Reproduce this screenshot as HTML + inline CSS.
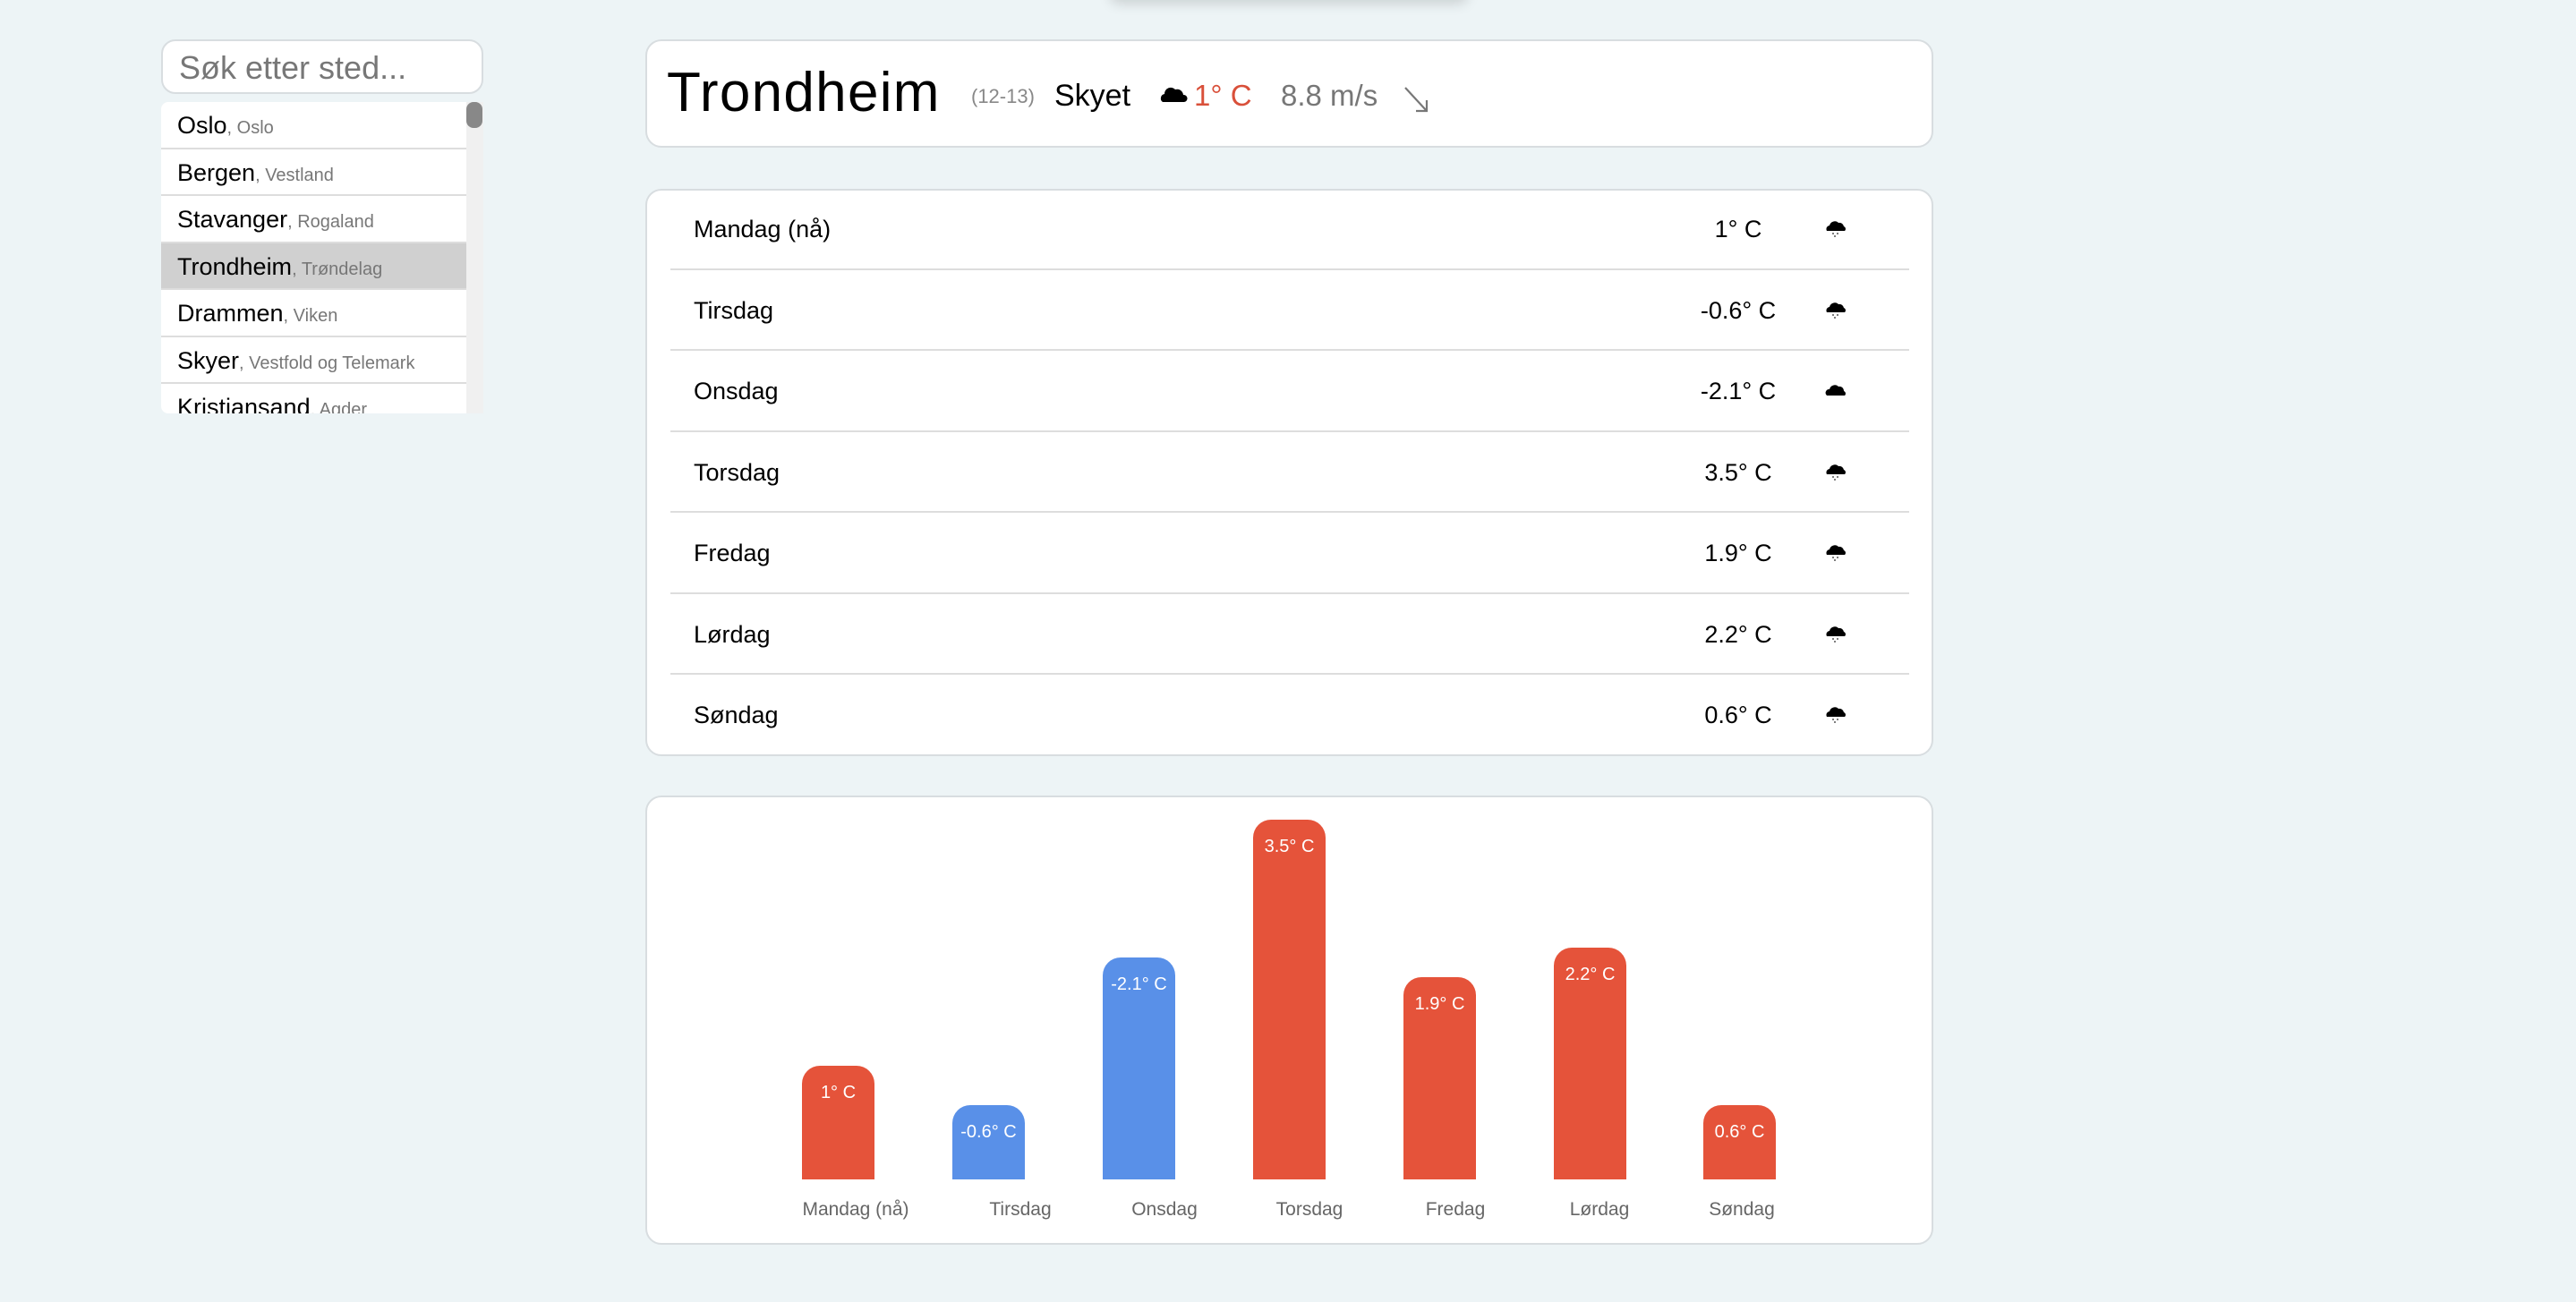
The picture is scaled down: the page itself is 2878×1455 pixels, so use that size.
<!DOCTYPE html>
<html><head><meta charset="utf-8"><style>
*{margin:0;padding:0;box-sizing:border-box}
body{width:2878px;height:1455px;background:#edf4f6;font-family:"Liberation Sans",sans-serif;position:relative;overflow:hidden}
.abs{position:absolute}
.card{position:absolute;background:#fff;border:2px solid #d8dde0;border-radius:18px}
.search{left:180px;top:44px;width:360px;height:61px;background:#fff;border:2px solid #d8dde0;border-radius:16px;font-size:36px;color:#777;padding:9px 0 0 18px}
.list{left:180px;top:114px;width:360px;height:348px;background:#f0f0f0;overflow:hidden;border-radius:8px 0 0 8px}
.row{height:52.5px;width:341px;background:#fff;border-bottom:2px solid #ddd;font-size:27px;color:#000;padding:11px 0 0 18px;white-space:nowrap}
.row span{font-size:20px;color:#777}
.row.sel{background:#d0d0d0}
.thumb{left:521px;top:114px;width:18px;height:29px;background:#888;border-radius:8px}
.drow{position:absolute;left:749px;width:1384px;height:90.5px;border-bottom:2px solid #ddd;font-size:27px}
.drow .d{position:absolute;left:26px;top:30px}
.drow .t{position:absolute;left:1143px;width:100px;text-align:center;top:30px}
.drow svg{position:absolute;left:1290px;top:34px}
.bar{position:absolute;width:81px;border-radius:20px 20px 0 0;color:#fff;font-size:20px;text-align:center;padding-top:19px}
.r{background:#e5533a}.b{background:#5990e8}
.lab{position:absolute;top:1340px;font-size:21px;color:#666;text-align:center;width:160px}
</style></head><body>
<div class="abs" style="left:1240px;top:-20px;width:400px;height:20px;box-shadow:0 4px 14px rgba(0,0,0,.15);border-radius:10px"></div>
<div class="abs search">Søk etter sted...</div>
<div class="abs list">
<div class="row">Oslo<span>, Oslo</span></div>
<div class="row">Bergen<span>, Vestland</span></div>
<div class="row">Stavanger<span>, Rogaland</span></div>
<div class="row sel">Trondheim<span>, Trøndelag</span></div>
<div class="row">Drammen<span>, Viken</span></div>
<div class="row">Skyer<span>, Vestfold og Telemark</span></div>
<div class="row">Kristiansand<span>, Agder</span></div>
</div>
<div class="abs thumb"></div>

<div class="card" style="left:721px;top:44px;width:1439px;height:121px"></div>
<div class="abs" style="left:745px;top:68px;font-size:62px;color:#000;letter-spacing:1.3px">Trondheim</div>
<div class="abs" style="left:1085px;top:95px;font-size:22px;color:#888">(12-13)</div>
<div class="abs" style="left:1178px;top:88px;font-size:34px;color:#000">Skyet</div>
<svg class="abs" style="left:1295px;top:95px" width="32" height="20" viewBox="0 0 32 20"><path d="M4 19 A5 5 0 0 1 6 10 A7 7 0 0 1 18 5 A7 7 0 0 1 27 11 A4 4 0 0 1 28 19 Z" fill="#000"/></svg>
<div class="abs" style="left:1334px;top:88px;font-size:33px;color:#d9503a">1° C</div>
<div class="abs" style="left:1431px;top:88px;font-size:33px;color:#777">8.8 m/s</div>
<svg class="abs" style="left:1568px;top:96px" width="30" height="32" viewBox="0 0 30 32"><path d="M2 2 L26 28 M26 16 L26 28 L14 28" stroke="#777" stroke-width="2.2" fill="none"/></svg>

<div class="card" style="left:721px;top:211px;width:1439px;height:634px"></div>
<div class="drow" style="top:211px"><span class="d">Mandag (nå)</span><span class="t">1° C</span><svg width="24" height="22" viewBox="0 0 24 22"><path d="M2 13 A4 4 0 0 1 5 7 A6 6 0 0 1 15 4 A5 5 0 0 1 21 8 A3 3 0 0 1 22 13 Z" fill="#000"/><circle cx="9" cy="16" r="1" fill="#555"/><circle cx="14" cy="16" r="1" fill="#555"/><circle cx="11" cy="19" r="1" fill="#555"/></svg></div>
<div class="drow" style="top:301.5px"><span class="d">Tirsdag</span><span class="t">-0.6° C</span><svg width="24" height="22" viewBox="0 0 24 22"><path d="M2 13 A4 4 0 0 1 5 7 A6 6 0 0 1 15 4 A5 5 0 0 1 21 8 A3 3 0 0 1 22 13 Z" fill="#000"/><circle cx="9" cy="16" r="1" fill="#555"/><circle cx="14" cy="16" r="1" fill="#555"/><circle cx="11" cy="19" r="1" fill="#555"/></svg></div>
<div class="drow" style="top:392px"><span class="d">Onsdag</span><span class="t">-2.1° C</span><svg width="24" height="22" viewBox="0 0 24 22"><path d="M2 16 A4 4 0 0 1 5 9 A6 6 0 0 1 15 6 A5 5 0 0 1 21 11 A3 3 0 0 1 22 16 Z" fill="#000"/></svg></div>
<div class="drow" style="top:482.5px"><span class="d">Torsdag</span><span class="t">3.5° C</span><svg width="24" height="22" viewBox="0 0 24 22"><path d="M2 13 A4 4 0 0 1 5 7 A6 6 0 0 1 15 4 A5 5 0 0 1 21 8 A3 3 0 0 1 22 13 Z" fill="#000"/><circle cx="9" cy="16" r="1" fill="#555"/><circle cx="14" cy="16" r="1" fill="#555"/><circle cx="11" cy="19" r="1" fill="#555"/></svg></div>
<div class="drow" style="top:573px"><span class="d">Fredag</span><span class="t">1.9° C</span><svg width="24" height="22" viewBox="0 0 24 22"><path d="M2 13 A4 4 0 0 1 5 7 A6 6 0 0 1 15 4 A5 5 0 0 1 21 8 A3 3 0 0 1 22 13 Z" fill="#000"/><circle cx="9" cy="16" r="1" fill="#555"/><circle cx="14" cy="16" r="1" fill="#555"/><circle cx="11" cy="19" r="1" fill="#555"/></svg></div>
<div class="drow" style="top:663.5px"><span class="d">Lørdag</span><span class="t">2.2° C</span><svg width="24" height="22" viewBox="0 0 24 22"><path d="M2 13 A4 4 0 0 1 5 7 A6 6 0 0 1 15 4 A5 5 0 0 1 21 8 A3 3 0 0 1 22 13 Z" fill="#000"/><circle cx="9" cy="16" r="1" fill="#555"/><circle cx="14" cy="16" r="1" fill="#555"/><circle cx="11" cy="19" r="1" fill="#555"/></svg></div>
<div class="drow" style="top:754px;border-bottom:none"><span class="d">Søndag</span><span class="t">0.6° C</span><svg width="24" height="22" viewBox="0 0 24 22"><path d="M2 13 A4 4 0 0 1 5 7 A6 6 0 0 1 15 4 A5 5 0 0 1 21 8 A3 3 0 0 1 22 13 Z" fill="#000"/><circle cx="9" cy="16" r="1" fill="#555"/><circle cx="14" cy="16" r="1" fill="#555"/><circle cx="11" cy="19" r="1" fill="#555"/></svg></div>

<div class="card" style="left:721px;top:889px;width:1439px;height:502px"></div>
<div class="bar r" style="left:896px;top:1191px;height:127px">1° C</div>
<div class="bar b" style="left:1064px;top:1235px;height:83px">-0.6° C</div>
<div class="bar b" style="left:1232px;top:1070px;height:248px">-2.1° C</div>
<div class="bar r" style="left:1400px;top:916px;height:402px">3.5° C</div>
<div class="bar r" style="left:1568px;top:1092px;height:226px">1.9° C</div>
<div class="bar r" style="left:1736px;top:1059px;height:259px">2.2° C</div>
<div class="bar r" style="left:1903px;top:1235px;height:83px">0.6° C</div>
<div class="lab" style="left:876px">Mandag (nå)</div>
<div class="lab" style="left:1060px">Tirsdag</div>
<div class="lab" style="left:1221px">Onsdag</div>
<div class="lab" style="left:1383px">Torsdag</div>
<div class="lab" style="left:1546px">Fredag</div>
<div class="lab" style="left:1707px">Lørdag</div>
<div class="lab" style="left:1866px">Søndag</div>
</body></html>
